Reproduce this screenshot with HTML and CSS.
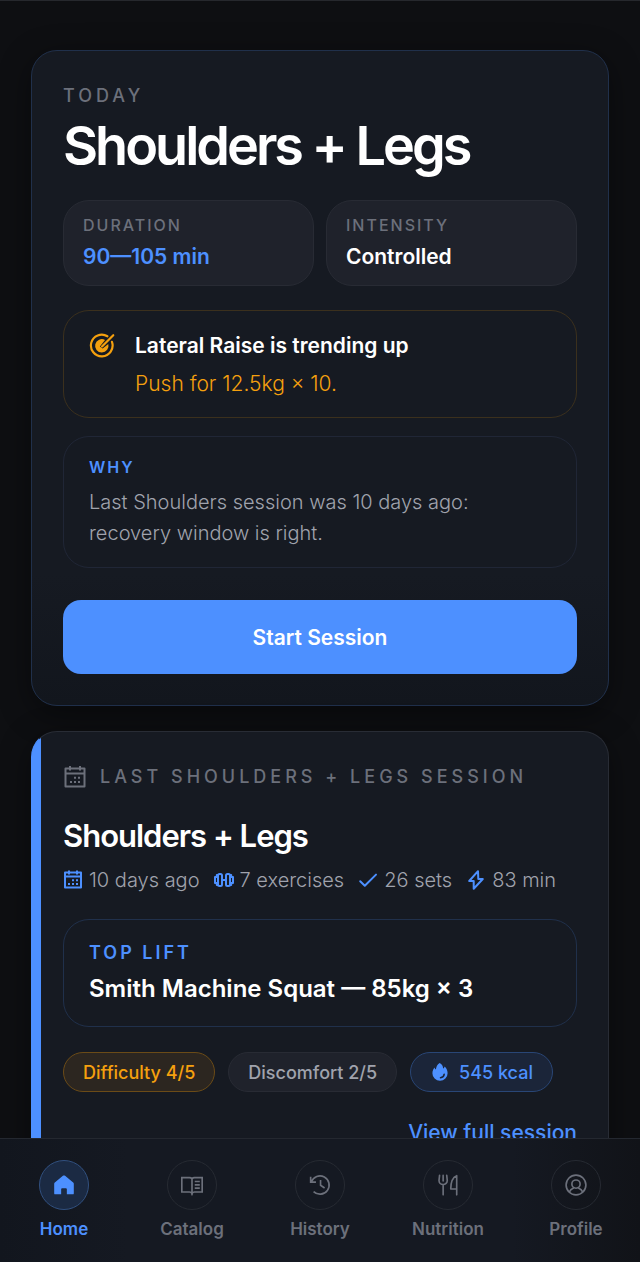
FILE: index.html
```html
<!DOCTYPE html>
<html lang="en">
<head>
    <meta charset="UTF-8">
    <meta name="viewport" content="width=device-width, initial-scale=1.0">
    <title>Today's Workout</title>
    <link rel="stylesheet" href="styles.css">
</head>
<body>

    <div class="app">
        <main class="content">
            <section class="card today">
                <p class="eyebrow">TODAY</p>
                <h1>Shoulders + Legs</h1>

                <div class="tiles">
                    <div class="tile">
                        <span class="label">DURATION</span>
                        <strong class="blue">90—105 min</strong>
                    </div>
                    <div class="tile">
                        <span class="label">INTENSITY</span>
                        <strong>Controlled</strong>
                    </div>
                </div>

                <div class="trend">
                    <svg class="trend-icon" viewBox="0 0 24 24" fill="none" stroke="currentColor" stroke-width="2" stroke-linecap="round">
                        <path d="M17 3A10 10 0 1 0 21.2 8.200"/>
                        <path fill="currentColor" stroke="none" d="M14.800 6.400A6.200 6.200 0 1 0 17.800 10.200L12.600 14.400 10 12.400Z"/>
                        <path d="M12 12.400L22.400 2"/>
                    </svg>
                    <div>
                        <strong>Lateral Raise is trending up</strong>
                        <p>Push for 12.5kg × 10.</p>
                    </div>
                </div>

                <div class="why">
                    <span class="label blue">WHY</span>
                    <p>Last Shoulders session was 10 days ago: recovery window is right.</p>
                </div>

                <button type="button" class="start">Start Session</button>
            </section>

            <section class="card last">
                <h2 class="eyebrow last-header">
                    <svg viewBox="0 0 24 24" fill="none" stroke="currentColor" stroke-width="2" stroke-linejoin="round">
                        <path d="M2.500 3.500h19v18h-19zM2.500 8.500h19M7 1v4.500M17 1v4.500"/>
                        <path d="M11 12.800h2M15 12.800h2M7 17h2M11 17h2M15 17h2"/>
                    </svg>
                    <span>LAST SHOULDERS + LEGS SESSION</span>
                </h2>

                <h3>Shoulders + Legs</h3>

                <ul class="stats">
                    <li>
                        <svg viewBox="0 0 20 20" fill="none" stroke="currentColor" stroke-width="2" stroke-linejoin="round">
                            <path d="M2 2.500h16v15H2zM2 6.500h16M6 .5v4M14 .5v4"/>
                            <path d="M9 10.300h2M13 10.300h2M5 14h2M9 14h2M13 14h2"/>
                        </svg>
                        10 days ago
                    </li>
                    <li>
                        <svg viewBox="0 0 20 20" fill="none" stroke="currentColor" stroke-width="2" stroke-linejoin="round">
                            <path d="M4 5H2.800v2H1v6h1.800v2H4M16 5h1.200v2H19v6h-1.800v2H16"/>
                            <rect x="4" y="4" width="4" height="12" rx="1.500"/>
                            <rect x="12" y="4" width="4" height="12" rx="1.500"/>
                            <path d="M8 10h4"/>
                        </svg>
                        7 exercises
                    </li>
                    <li>
                        <svg viewBox="0 0 20 20" fill="none" stroke="currentColor" stroke-width="2" stroke-linecap="round" stroke-linejoin="round">
                            <path d="M2.200 11.200l4.600 4.600L18 4.600"/>
                        </svg>
                        26 sets
                    </li>
                    <li>
                        <svg viewBox="0 0 20 20" fill="none" stroke="currentColor" stroke-width="2" stroke-linejoin="round">
                            <path d="M12 1.200L3.200 11h4.500v7.800L16.800 9h-4.500z"/>
                        </svg>
                        83 min
                    </li>
                </ul>

                <div class="top-lift">
                    <span class="eyebrow blue">TOP LIFT</span>
                    <strong>Smith Machine Squat — 85kg × 3</strong>
                </div>

                <div class="pills">
                    <span class="pill pill-amber">Difficulty 4/5</span>
                    <span class="pill">Discomfort 2/5</span>
                    <span class="pill pill-blue">
                        <svg viewBox="0 0 20 20">
                            <path fill="currentColor" d="M9.600 1c2.300 1 3.500 3.400 3.500 5.400.8-.3 1.300-1.100 1.400-2C16.600 6 17.600 8.600 17.600 11.200a7.600 7.600 0 0 1-15.200 0c0-2.400 1-4.200 2-5.600.3 1 .8 1.600 1.500 1.900C6.100 5 7.300 2.400 9.600 1z"/>
                            <path fill="none" stroke="#1b2539" stroke-width="1.500" stroke-linecap="round" d="M10.500 15.800c2-.2 3.500-1.700 3.700-3.600"/>
                        </svg>
                        545 kcal
                    </span>
                </div>

                <a class="more" href="#session">View full session</a>
            </section>
        </main>

        <nav class="tabs">
            <a class="tab active" href="#home">
                <span class="tab-icon">
                    <svg viewBox="0 0 24 24"><path fill="currentColor" d="M12 1.500c.5 0 .8.2 1.200.5l8.800 7.300c.5.400.7.900.7 1.500v10.400c0 .6-.4 1-1 1h-6.600v-5.600c0-.6-.4-1-1-1h-4.200c-.6 0-1 .4-1 1v5.600H2.300c-.6 0-1-.4-1-1V10.800c0-.6.2-1.100.7-1.500L10.800 2c.4-.3.7-.5 1.200-.5z"/></svg>
                </span>
                Home
            </a>
            <a class="tab" href="#catalog">
                <span class="tab-icon">
                    <svg viewBox="0 0 24 24" fill="none" stroke="currentColor" stroke-width="1.800">
                        <path d="M12 5.200C11.300 4.200 10.400 4 9.200 4H.9v15.600h8.300c1.300 0 2.300.5 2.800 1.800.5-1.300 1.500-1.800 2.800-1.800h8.300V4h-8.300c-1.200 0-2.100.2-2.800 1.200zM12 5.200v18M15 8.200h5.500M15 11.800h5.500M15 15.400h5.500"/>
                    </svg>
                </span>
                Catalog
            </a>
            <a class="tab" href="#history">
                <span class="tab-icon">
                    <svg viewBox="0 0 24 24" fill="none" stroke="currentColor" stroke-width="1.800">
                        <path d="M2.600 8.500A10 10 0 1 1 5 19.200M1.800 3v5.800h5.800M12.600 6.500v5.800l4.400 3"/>
                    </svg>
                </span>
                History
            </a>
            <a class="tab" href="#nutrition">
                <span class="tab-icon">
                    <svg viewBox="0 0 24 24" fill="none" stroke="currentColor" stroke-width="1.800" stroke-linecap="round" stroke-linejoin="round">
                        <path d="M2.800 1.500L2.200 7a4.500 4.500 0 0 0 9 0l-.6-5.500M6.700 1.500v6M6.700 11.500v11.200M21.500 22.700V1.800c-4.200 1.600-6.500 7.600-6.500 14.600h6.500"/>
                    </svg>
                </span>
                Nutrition
            </a>
            <a class="tab" href="#profile">
                <span class="tab-icon">
                    <svg viewBox="0 0 24 24" fill="none" stroke="currentColor" stroke-width="1.800">
                        <circle cx="12" cy="12" r="10.800"/>
                        <circle cx="12" cy="11" r="4.500"/>
                        <path d="M4.600 19.800c1-2.500 3-3.800 5.200-4.700M19.400 19.800c-1-2.500-3-3.800-5.200-4.700"/>
                    </svg>
                </span>
                Profile
            </a>
        </nav>
    </div>

</body>
</html>
```
FILE: styles.css
```css
* {
    box-sizing: border-box;
}
body {
    margin: 0;
    font-family: Inter, "Open Sans", sans-serif;
    font-size: 21px;
    background-color: #0e0f12;
    color: #fff;
}
h1, h2, h3, p, ul {
    margin: 0;
    padding: 0;
}
strong {
    font-weight: 600;
}
.app {
    display: flex;
    flex-direction: column;
    height: 100vh;
    border-top: 1px solid #26282d;
}
.content {
    flex: 1;
    min-height: 0;
    overflow-y: auto;
    scrollbar-width: none;
    padding: 49px 31px 32px;
}
.card {
    padding: 31px;
    border: 1px solid #20304b;
    border-radius: 26px;
    background: #161a22;
    box-shadow: 0 8px 32px rgba(0, 0, 0, 0.4);
}
.eyebrow {
    font-size: 18px;
    line-height: 28px;
    font-weight: 500;
    letter-spacing: 4px;
    color: #6c707b;
}
.label {
    font-size: 16px;
    line-height: 24px;
    font-weight: 500;
    letter-spacing: 2px;
    color: #6c707b;
}
.blue {
    color: #4d90ff;
}

/* Today */
.today {
    margin-bottom: 25px;
    background: linear-gradient(#161a22 80%, #12161d);
}
h1 {
    margin: 4px 0 22px;
    font-size: 54px;
    line-height: 64px;
    font-weight: 600;
    letter-spacing: -3px;
}
.tiles {
    display: grid;
    grid-template-columns: 1fr 1fr;
    gap: 12px;
    margin-bottom: 24px;
}
.tile {
    display: flex;
    flex-direction: column;
    gap: 2px;
    padding: 12px 19px 10px;
    border: 1px solid #282b34;
    border-radius: 26px;
    background: #1f222b;
}
.tile strong {
    line-height: 36px;
}
.trend {
    display: flex;
    gap: 20px;
    margin-bottom: 18px;
    padding: 17px 25px 15px;
    border: 1px solid #3b301d;
    border-radius: 26px;
    line-height: 36px;
}
.trend p {
    margin-top: 2px;
    font-weight: 300;
    color: #f5a00e;
}
.trend-icon {
    width: 26px;
    height: 26px;
    margin-top: 5px;
    color: #f5a00e;
}
.why {
    padding: 18px 25px;
    border: 1px solid #202636;
    border-radius: 26px;
}
.why .label {
    display: block;
    margin-bottom: 8px;
    font-weight: 600;
}
.why .blue {
    color: #4d90ff;
}
.why p {
    font-size: 20px;
    line-height: 31px;
    font-weight: 300;
    color: #a0a3ad;
}
.start {
    display: block;
    width: 100%;
    height: 74px;
    margin-top: 32px;
    border: none;
    border-radius: 18px;
    background: #4d90ff;
    color: #fff;
    font: inherit;
    font-weight: 600;
    cursor: pointer;
}

/* Last session */
.last {
    border-color: #282c35;
    border-left-color: #4d90ff;
    background: linear-gradient(90deg, #4d90ff 10px, #161a22 10px) border-box;
}
.last-header {
    display: flex;
    align-items: center;
    gap: 13px;
    white-space: nowrap;
}
.last-header svg {
    width: 24px;
    height: 24px;
}
h3 {
    margin-top: 23px;
    font-size: 31px;
    line-height: 44px;
    font-weight: 600;
    letter-spacing: -1px;
}
.stats {
    display: flex;
    gap: 14px;
    margin: 6px 0 23px;
    list-style: none;
    font-size: 20px;
    line-height: 32px;
    font-weight: 300;
    color: #a0a3ad;
    white-space: nowrap;
}
.stats li {
    display: flex;
    align-items: center;
    gap: 6px;
}
.stats svg {
    width: 20px;
    height: 20px;
    color: #4d90ff;
}
.top-lift {
    display: flex;
    flex-direction: column;
    gap: 4px;
    padding: 19px 25px;
    border: 1px solid #20304b;
    border-radius: 26px;
}
.top-lift .eyebrow {
    font-weight: 600;
    letter-spacing: 3px;
    color: #4d90ff;
}
.top-lift strong {
    font-size: 24px;
    line-height: 36px;
}
.pills {
    display: flex;
    gap: 13px;
    margin: 25px 0;
}
.pill {
    display: flex;
    align-items: center;
    gap: 9px;
    height: 40px;
    padding: 0 19px;
    border: 1px solid #282b34;
    border-radius: 20px;
    background: #1f222b;
    font-size: 18px;
    font-weight: 500;
    color: #a0a3ad;
    white-space: nowrap;
}
.pill svg {
    width: 20px;
    height: 20px;
}
.pill-amber {
    border-color: #6b4b17;
    background: #2c2620;
    color: #f5a00e;
}
.pill-blue {
    border-color: #294676;
    background: #1b2539;
    color: #4d90ff;
}
.more {
    display: block;
    text-align: right;
    line-height: 32px;
    font-weight: 500;
    color: #4d90ff;
    text-decoration: none;
}

/* Bottom navigation */
.tabs {
    display: grid;
    grid-template-columns: repeat(5, 1fr);
    padding: 21px 0;
    border-top: 1px solid #242830;
    background: linear-gradient(90deg, #12161e, #151922 20%, #151922 80%, #111318);
}
.tab {
    display: flex;
    flex-direction: column;
    align-items: center;
    gap: 7px;
    font-size: 17px;
    line-height: 24px;
    font-weight: 600;
    color: #6c707b;
    text-decoration: none;
}
.tab-icon {
    display: flex;
    align-items: center;
    justify-content: center;
    width: 50px;
    height: 50px;
    border: 1px solid #262a32;
    border-radius: 50%;
}
.tab-icon svg {
    width: 22px;
    height: 22px;
}
.active {
    color: #4d90ff;
}
.active .tab-icon {
    border-color: #31507f;
    background: #1b2a43;
}
```
